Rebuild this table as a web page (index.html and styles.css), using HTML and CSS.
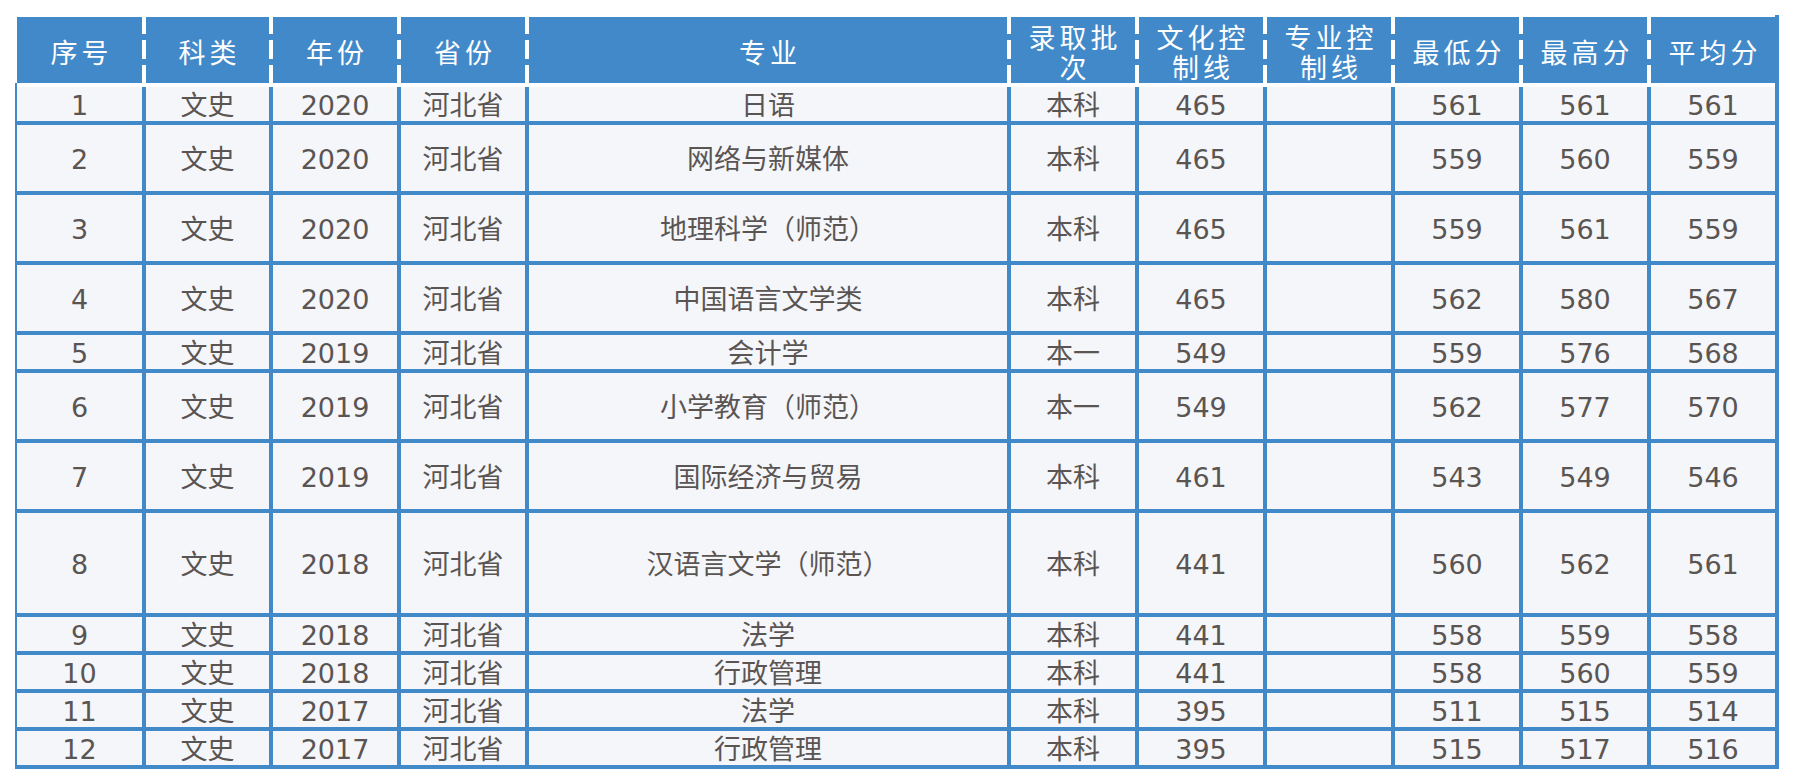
FILE: index.html
```html
<!DOCTYPE html>
<html lang="zh-CN">
<head>
<meta charset="utf-8">
<title>录取分数</title>
<link rel="stylesheet" href="styles.css">
</head>
<body>
<div class="sheet">
  <div class="head">
    <div class="th">序号</div>
    <div class="th">科类</div>
    <div class="th">年份</div>
    <div class="th">省份</div>
    <div class="th">专业</div>
    <div class="th">录取批次</div>
    <div class="th">文化控制线</div>
    <div class="th">专业控制线</div>
    <div class="th">最低分</div>
    <div class="th">最高分</div>
    <div class="th">平均分</div>
  </div>
  <div class="body">
    <div class="rows">
      <div class="row r-s"><div class="td">1</div><div class="td">文史</div><div class="td">2020</div><div class="td">河北省</div><div class="td">日语</div><div class="td">本科</div><div class="td">465</div><div class="td"></div><div class="td">561</div><div class="td">561</div><div class="td">561</div></div>
      <div class="row r-m"><div class="td">2</div><div class="td">文史</div><div class="td">2020</div><div class="td">河北省</div><div class="td">网络与新媒体</div><div class="td">本科</div><div class="td">465</div><div class="td"></div><div class="td">559</div><div class="td">560</div><div class="td">559</div></div>
      <div class="row r-m"><div class="td">3</div><div class="td">文史</div><div class="td">2020</div><div class="td">河北省</div><div class="td">地理科学（师范）</div><div class="td">本科</div><div class="td">465</div><div class="td"></div><div class="td">559</div><div class="td">561</div><div class="td">559</div></div>
      <div class="row r-m"><div class="td">4</div><div class="td">文史</div><div class="td">2020</div><div class="td">河北省</div><div class="td">中国语言文学类</div><div class="td">本科</div><div class="td">465</div><div class="td"></div><div class="td">562</div><div class="td">580</div><div class="td">567</div></div>
      <div class="row r-s"><div class="td">5</div><div class="td">文史</div><div class="td">2019</div><div class="td">河北省</div><div class="td">会计学</div><div class="td">本一</div><div class="td">549</div><div class="td"></div><div class="td">559</div><div class="td">576</div><div class="td">568</div></div>
      <div class="row r-m"><div class="td">6</div><div class="td">文史</div><div class="td">2019</div><div class="td">河北省</div><div class="td">小学教育（师范）</div><div class="td">本一</div><div class="td">549</div><div class="td"></div><div class="td">562</div><div class="td">577</div><div class="td">570</div></div>
      <div class="row r-m"><div class="td">7</div><div class="td">文史</div><div class="td">2019</div><div class="td">河北省</div><div class="td">国际经济与贸易</div><div class="td">本科</div><div class="td">461</div><div class="td"></div><div class="td">543</div><div class="td">549</div><div class="td">546</div></div>
      <div class="row r-l"><div class="td">8</div><div class="td">文史</div><div class="td">2018</div><div class="td">河北省</div><div class="td">汉语言文学（师范）</div><div class="td">本科</div><div class="td">441</div><div class="td"></div><div class="td">560</div><div class="td">562</div><div class="td">561</div></div>
      <div class="row r-s"><div class="td">9</div><div class="td">文史</div><div class="td">2018</div><div class="td">河北省</div><div class="td">法学</div><div class="td">本科</div><div class="td">441</div><div class="td"></div><div class="td">558</div><div class="td">559</div><div class="td">558</div></div>
      <div class="row r-s"><div class="td">10</div><div class="td">文史</div><div class="td">2018</div><div class="td">河北省</div><div class="td">行政管理</div><div class="td">本科</div><div class="td">441</div><div class="td"></div><div class="td">558</div><div class="td">560</div><div class="td">559</div></div>
      <div class="row r-s"><div class="td">11</div><div class="td">文史</div><div class="td">2017</div><div class="td">河北省</div><div class="td">法学</div><div class="td">本科</div><div class="td">395</div><div class="td"></div><div class="td">511</div><div class="td">515</div><div class="td">514</div></div>
      <div class="row r-s"><div class="td">12</div><div class="td">文史</div><div class="td">2017</div><div class="td">河北省</div><div class="td">行政管理</div><div class="td">本科</div><div class="td">395</div><div class="td"></div><div class="td">515</div><div class="td">517</div><div class="td">516</div></div>
    </div>
  </div>
</div>
</body>
</html>
```

FILE: styles.css
```css
html, body {
  margin: 0;
  padding: 0;
  background: #ffffff;
}

.sheet {
  margin: 15px 0 0 15px;
  width: 1760px;
  padding-top: 2px;
  border-right: 4px solid #4289c9;
  font-family: "DejaVu Sans", "Noto Sans CJK SC", sans-serif;
}

.head,
.row {
  display: grid;
  grid-template-columns: 125px 123px 124px 124px 478px 124px 124px 124px 124px 124px 124px;
  column-gap: 4px;
}

.head {
  margin-left: 2px;
  height: 66px;
  background: linear-gradient(to bottom,
    #ffffff 0 17px,
    #4289c9 17px 23px,
    #ffffff 23px 42px,
    #4289c9 42px 48px,
    #ffffff 48px 66px);
}

.th {
  background: #4289c9;
  color: #ffffff;
  font-family: "Noto Sans CJK SC", sans-serif;
  font-size: 27px;
  line-height: 30px;
  letter-spacing: 4px;
  padding: 4px 6px 0 10px;
  display: flex;
  align-items: center;
  justify-content: center;
  text-align: center;
}

.body {
  padding-top: 4px;
  border-left: 2px solid #4289c9;
  border-bottom: 4px solid #4289c9;
  background: #ffffff;
}

.rows {
  display: flex;
  flex-direction: column;
  gap: 4px;
  background: #4289c9;
}

.row {
  background: #4289c9;
}

.r-s { height: 34px; }
.r-m { height: 66px; }
.r-l { height: 100px; }

.td {
  background: #f5f6fa;
  color: #5a5553;
  font-size: 27px;
  line-height: 30px;
  padding-top: 4px;
  display: flex;
  align-items: center;
  justify-content: center;
  text-align: center;
}
```
